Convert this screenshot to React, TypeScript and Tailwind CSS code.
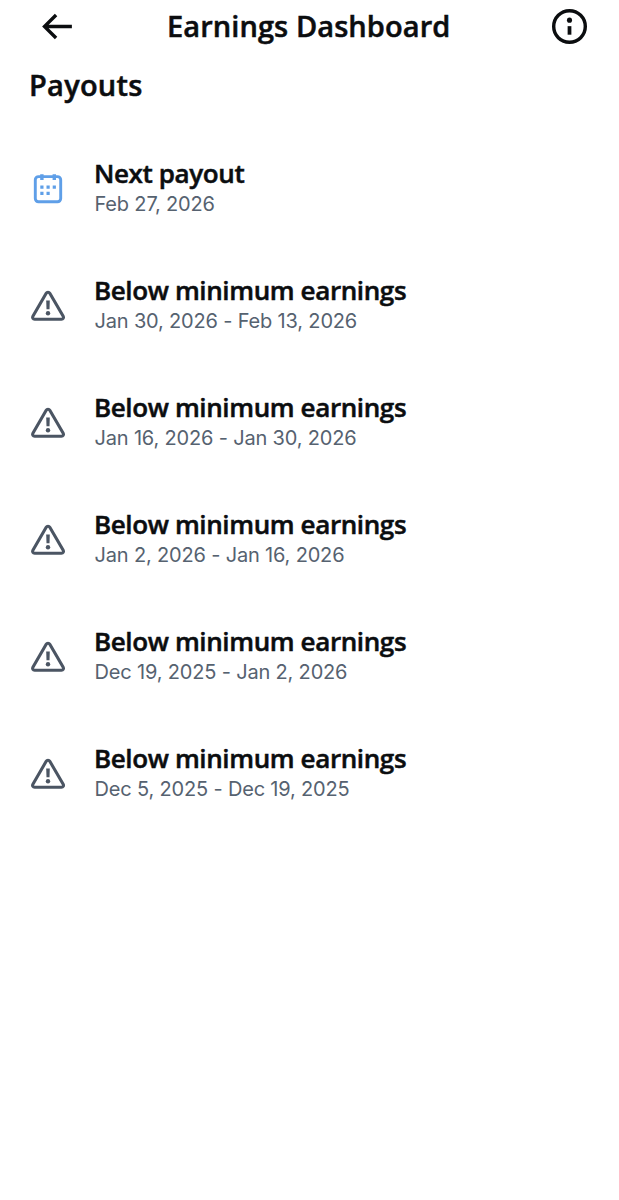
const payouts = [
  { title: 'Next payout', date: 'Feb 27, 2026', upcoming: true },
  { title: 'Below minimum earnings', date: 'Jan 30, 2026 - Feb 13, 2026' },
  { title: 'Below minimum earnings', date: 'Jan 16, 2026 - Jan 30, 2026' },
  { title: 'Below minimum earnings', date: 'Jan 2, 2026 - Jan 16, 2026' },
  { title: 'Below minimum earnings', date: 'Dec 19, 2025 - Jan 2, 2026' },
  { title: 'Below minimum earnings', date: 'Dec 5, 2025 - Dec 19, 2025' },
];

function BackIcon() {
  return (
    <svg viewBox="0 0 24 24" className="w-[41px] h-[41px]" fill="currentColor">
      <path d="M7.414 13l5.043 5.04-1.414 1.42L3.586 12l7.457-7.46 1.414 1.42L7.414 11H21v2H7.414z" />
    </svg>
  );
}

function InfoIcon() {
  return (
    <svg viewBox="0 0 24 24" className="w-[41px] h-[41px]" fill="currentColor">
      <circle cx="12" cy="12" r="9.25" fill="none" stroke="currentColor" strokeWidth="2" />
      <circle cx="12" cy="8.3" r="1.5" />
      <path d="M10.9 11.8h2.2v5h-2.2z" />
    </svg>
  );
}

function CalendarIcon() {
  return (
    <svg viewBox="0 0 36 36" className="w-9 h-9 text-[#5f9fe8]" fill="currentColor">
      <rect x="5.3" y="5.6" width="25.4" height="25.2" rx="3.2" fill="none" stroke="currentColor" strokeWidth="2.9" />
      <path d="M10.2 3.2h3.4v5.8h-3.4zM22.6 3.2H26v5.8h-3.4z" />
      <path d="M10.3 14.6h3.2v3.2h-3.2zM16.5 14.6h3.2v3.2h-3.2zM22.7 14.6h3.2v3.2h-3.2zM10.3 20.8h3.2V24h-3.2zM16.5 20.8h3.2V24h-3.2z" />
    </svg>
  );
}

function WarningIcon() {
  return (
    <svg viewBox="0 0 36 36" className="w-9 h-9 text-[#4b5563]" fill="currentColor">
      <path
        d="M16.2 5.3 2.9 28.3c-.8 1.4.1 3 1.7 3h26.9c1.6 0 2.5-1.6 1.7-3L19.8 5.3c-.8-1.4-2.8-1.4-3.6 0z"
        fill="none"
        stroke="currentColor"
        strokeWidth="3.1"
        strokeLinejoin="round"
      />
      <path d="M16.2 12.6h3.6l-.3 8.6h-3z" />
      <circle cx="18" cy="25.3" r="2.2" />
    </svg>
  );
}

export default function App() {
  return (
    <main className="min-h-screen bg-white text-[#0b0d0f] font-['Open_Sans',sans-serif]">
      {/* Header */}
      <header className="flex h-[53px] items-center pl-[36px] pr-[29px]">
        <button aria-label="Back">
          <BackIcon />
        </button>
        <h1 className="ml-[90px] grow pb-[1px] text-[29px] leading-[40px] font-semibold tracking-[0.08px] whitespace-nowrap [-webkit-text-stroke:0.5px]">
          Earnings Dashboard
        </h1>
        <button aria-label="Info">
          <InfoIcon />
        </button>
      </header>

      <h2 className="px-[29px] pt-3 text-[29px] leading-[40px] font-semibold tracking-[0.25px] [-webkit-text-stroke:0.5px]">
        Payouts
      </h2>

      {/* Payout history */}
      <ul className="mt-[25px]">
        {payouts.map((payout, index) => (
          <li key={index} className="flex h-[117px] items-center gap-[28px] pl-[30px]">
            {payout.upcoming ? <CalendarIcon /> : <WarningIcon />}
            <div className="pb-[1px]">
              <p className="text-[26px] leading-[32px] font-semibold tracking-[-0.38px] [-webkit-text-stroke:0.5px]">
                {payout.title}
              </p>
              <p className="pl-[0.5px] font-[Inter,sans-serif] text-[20px] leading-[30px] tracking-[-0.17px] text-[#566270]">
                {payout.date}
              </p>
            </div>
          </li>
        ))}
      </ul>
    </main>
  );
}
